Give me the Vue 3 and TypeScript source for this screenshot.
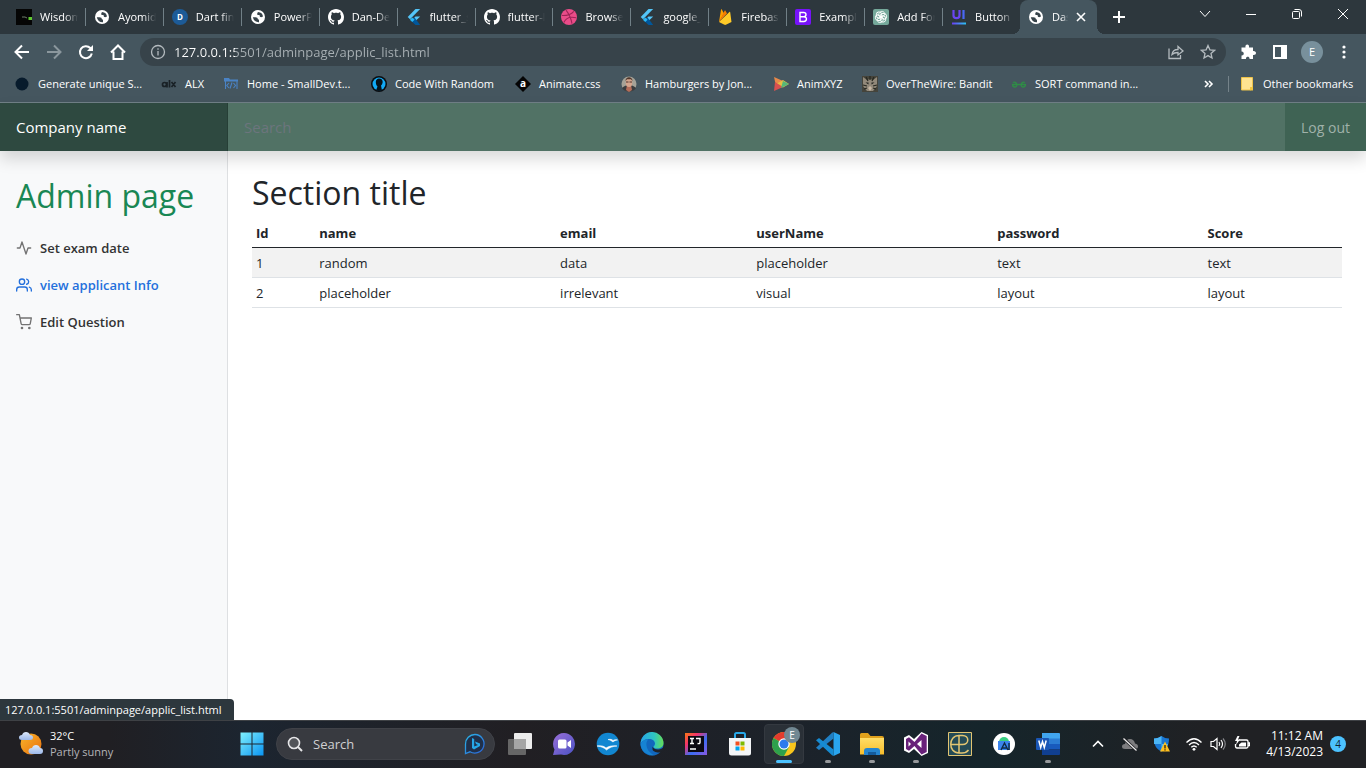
<script setup lang="ts">
import { ref } from 'vue'

interface Item { icon: string; label: string }
interface TaskApp extends Item { running?: boolean; active?: boolean }

const tabs: Item[] = [
  { icon: 'wisdom', label: 'Wisdom' },
  { icon: 'globe', label: 'Ayomide' },
  { icon: 'dart', label: 'Dart find' },
  { icon: 'globe', label: 'PowerPo' },
  { icon: 'github', label: 'Dan-Dev' },
  { icon: 'flutter', label: 'flutter_s' },
  { icon: 'github', label: 'flutter-l' },
  { icon: 'dribbble', label: 'Browse' },
  { icon: 'flutter', label: 'google_' },
  { icon: 'firebase', label: 'Firebase' },
  { icon: 'bootstrap', label: 'Example' },
  { icon: 'gpt', label: 'Add Fon' },
  { icon: 'ui', label: 'Button' },
]

const bookmarks: Item[] = [
  { icon: 'dot', label: 'Generate unique S...' },
  { icon: 'alx', label: 'ALX' },
  { icon: 'smalldev', label: 'Home - SmallDev.t...' },
  { icon: 'random', label: 'Code With Random' },
  { icon: 'animate', label: 'Animate.css' },
  { icon: 'person', label: 'Hamburgers by Jon...' },
  { icon: 'xyz', label: 'AnimXYZ' },
  { icon: 'cat', label: 'OverTheWire: Bandit' },
  { icon: 'geeks', label: 'SORT command in...' },
]

const links = [
  { icon: 'activity', label: 'Set exam date', active: false },
  { icon: 'users', label: 'view applicant Info', active: true },
  { icon: 'cart', label: 'Edit Question', active: false },
]

const columns = ['Id', 'name', 'email', 'userName', 'password', 'Score']
const rows = [
  ['1', 'random', 'data', 'placeholder', 'text', 'text'],
  ['2', 'placeholder', 'irrelevant', 'visual', 'layout', 'layout'],
]

const apps: TaskApp[] = [
  { icon: 'taskview', label: 'Task view' },
  { icon: 'chat', label: 'Chat' },
  { icon: 'office', label: 'OpenOffice' },
  { icon: 'edge', label: 'Edge' },
  { icon: 'idea', label: 'IntelliJ IDEA' },
  { icon: 'store', label: 'Store' },
  { icon: 'chrome', label: 'Chrome', running: true, active: true },
  { icon: 'vscode', label: 'VS Code', running: true },
  { icon: 'explorer', label: 'File Explorer', running: true },
  { icon: 'vs', label: 'Visual Studio', running: true },
  { icon: 'pe', label: 'PE' },
  { icon: 'android', label: 'Android Studio' },
  { icon: 'word', label: 'Word', running: true },
]

const url = ref('127.0.0.1:5501/adminpage/applic_list.html')
const query = ref('')
</script>

<template>
  <div class="screen">
    <svg class="defs" width="0" height="0" aria-hidden="true">
      <defs>
        <linearGradient id="g-win" x1="0" y1="0" x2="1" y2="1"><stop offset="0" stop-color="#7ff0fd" /><stop offset="1" stop-color="#0a94f2" /></linearGradient>
        <linearGradient id="g-sun" x1="0" y1="0" x2="1" y2="1"><stop offset="0" stop-color="#f9b52a" /><stop offset="1" stop-color="#e8700f" /></linearGradient>
        <linearGradient id="g-cloud" x1="0" y1="0" x2="0" y2="1"><stop offset="0" stop-color="#dce9fb" /><stop offset="1" stop-color="#9db9ea" /></linearGradient>
        <linearGradient id="g-bing" x1="0" y1="0" x2="1" y2="1"><stop offset="0" stop-color="#2bb7e8" /><stop offset="1" stop-color="#2b62d9" /></linearGradient>
        <linearGradient id="g-ui" x1="0" y1="0" x2="1" y2="0"><stop offset="0" stop-color="#6a3df5" /><stop offset="1" stop-color="#2ac3f2" /></linearGradient>
        <linearGradient id="g-chat" x1="0" y1="0" x2="1" y2="1"><stop offset="0" stop-color="#9a6fd8" /><stop offset="1" stop-color="#4a52c4" /></linearGradient>
        <linearGradient id="g-edge" x1="0" y1="0" x2="1" y2="0"><stop offset="0" stop-color="#27a4e8" /><stop offset=".6" stop-color="#2fc6c0" /><stop offset="1" stop-color="#66dd55" /></linearGradient>
        <linearGradient id="g-idea" x1="0" y1="0" x2="1" y2="1"><stop offset="0" stop-color="#f97a12" /><stop offset=".3" stop-color="#f4326b" /><stop offset=".6" stop-color="#3a6ef5" /><stop offset="1" stop-color="#8a58e0" /></linearGradient>
        <linearGradient id="g-folder" x1="0" y1="0" x2="0" y2="1"><stop offset="0" stop-color="#ffdd66" /><stop offset="1" stop-color="#f8bd2b" /></linearGradient>
      </defs>

      <symbol id="wisdom" viewBox="0 0 16 16"><rect width="16" height="16" fill="#050505" /><path d="M6 8h3l2 1" stroke="#6e7d6b" fill="none" /><path d="M12.500 9.500h3.500" stroke="#5fca30" stroke-width="3" /></symbol>
      <symbol id="globe" viewBox="0 0 16 16"><circle cx="8" cy="8" r="7" fill="#fff" /><path d="M8 3q4.500.3 5 4.500l-1.800.7q-1.700 0-1.700-2.200H7.500q-.8-1.500.5-3zM2.800 8.200h2.700q2.500 0 2.500 2.300h1v2.700Q4 13.500 2.800 8.200z" fill="#37434a" /></symbol>
      <symbol id="dart" viewBox="0 0 16 16"><circle cx="8" cy="8" r="8" fill="#1d5b97" /><text x="8" y="11" text-anchor="middle" font-family="Open Sans, sans-serif" font-weight="700" font-size="8" fill="#fff">D</text></symbol>
      <symbol id="github" viewBox="0 0 16 16"><path fill="#fff" d="M8 0C3.580 0 0 3.580 0 8c0 3.540 2.290 6.530 5.470 7.590.4.070.55-.17.55-.38 0-.19-.01-.82-.01-1.490-2.010.37-2.530-.49-2.690-.94-.09-.23-.48-.94-.82-1.130-.28-.15-.68-.52-.01-.53.63-.01 1.080.58 1.230.82.72 1.210 1.870.87 2.330.66.070-.52.28-.87.51-1.070-1.780-.2-3.640-.89-3.640-3.950 0-.87.31-1.590.82-2.150-.08-.2-.36-1.020.08-2.120 0 0 .67-.21 2.200.82.64-.18 1.320-.27 2-.27s1.360.09 2 .27c1.530-1.040 2.200-.82 2.200-.82.44 1.100.16 1.920.08 2.120.51.56.82 1.270.82 2.150 0 3.070-1.870 3.750-3.650 3.950.29.25.54.73.54 1.480 0 1.070-.01 1.930-.01 2.200 0 .21.15.46.55.38A8.010 8.010 0 0 0 16 8c0-4.420-3.580-8-8-8z" /></symbol>
      <symbol id="flutter" viewBox="0 0 16 16"><path d="M9.500 0h4.700L4 10.200 1.700 7.900z" fill="#54c5f8" /><path d="M9.500 7.400h4.700L8.400 13 6 10.700z" fill="#54c5f8" /><path d="M6 10.700l2.400-2.400 5.800 7.700H9.500l-3.400-3.300z" fill="#01579b" /><path d="M3.900 10.700L6.200 8.400l2.400 2.300-2.400 2.400z" fill="#29b6f6" /></symbol>
      <symbol id="dribbble" viewBox="0 0 16 16"><circle cx="8" cy="8" r="8" fill="#ea4c89" /><path d="M1 6.500c5 .2 9-.8 11.800-4.200M5 1.200c3 3.800 5 8 6 13.500M2.800 13.500c2-4.500 6.500-6.200 12.500-4.700" fill="none" stroke="#9e2457" stroke-width="1.100" /></symbol>
      <symbol id="firebase" viewBox="0 0 16 16"><path d="M2 13L4 .7c.1-.5.6-.5.8-.1L7 4.500z" fill="#ffa000" /><path d="M2 13l8-8.500-1.500-2.800c-.2-.4-.7-.4-.9 0z" fill="#f57c00" /><path d="M2 13L12.400 3c.3-.3.7-.1.8.3L14.500 13l-5.600 2.800c-.5.200-1 .2-1.400 0z" fill="#ffca28" /></symbol>
      <symbol id="bootstrap" viewBox="0 0 16 16"><rect width="16" height="16" rx="2" fill="#7712fa" /><path d="M5 3.500h3.700c3 0 3 4 .3 4.200 3.300 0 3.300 4.800-.2 4.800H5zM5 7.800h4" fill="none" stroke="#fff" stroke-width="1.400" /></symbol>
      <symbol id="gpt" viewBox="0 0 16 16"><rect width="16" height="16" rx="2" fill="#75a99b" /><g fill="none" stroke="#fff" stroke-width=".9"><path id="petal" d="M8 2.500c2.500-.7 4.500 1.500 3.500 3.800L8 8.300 5.800 7V4.500z" /><use href="#petal" transform="rotate(60 8 8)" /><use href="#petal" transform="rotate(120 8 8)" /><use href="#petal" transform="rotate(180 8 8)" /><use href="#petal" transform="rotate(240 8 8)" /><use href="#petal" transform="rotate(300 8 8)" /></g></symbol>
      <symbol id="ui" viewBox="0 0 16 16"><path d="M2.500 1v5.500c0 3.500 6 3.500 6 0V1" fill="none" stroke="#6a45f2" stroke-width="2.200" /><path d="M12.500 1v9" stroke="#4a68f5" stroke-width="2.200" /><path d="M1 13.500h14v2H1z" fill="url(#g-ui)" /></symbol>

      <symbol id="dot" viewBox="0 0 16 16"><circle cx="8" cy="8" r="6.500" fill="#071b2c" /></symbol>
      <symbol id="alx" viewBox="0 0 16 16"><g fill="none" stroke="#192126" stroke-width="1.700"><circle cx="3.500" cy="8.500" r="2" /><path d="M6 6v5.500M8.500 4v7.500M10.500 6l4 5M14.500 6l-4 5" /></g></symbol>
      <symbol id="smalldev" viewBox="0 0 16 16"><path d="M1 2h5l1 1.500h8v2H1z" fill="#4a83c5" /><path d="M2.500 5v8M14 5v8M6 7L3.800 9.500 6 12M9 6.500l-2 6M10.500 7l2 2.500-2 2.500" fill="none" stroke="#4a83c5" stroke-width="1.100" /></symbol>
      <symbol id="random" viewBox="0 0 16 16"><circle cx="8" cy="8" r="8" fill="#0a0d10" /><circle cx="8" cy="8" r="6.500" fill="#12aaf5" /><path d="M8 2.500c4.500 0 4.500 5 2 7l1 5c-2 .7-4.500.6-6 0l1.500-4C4 8 4.200 2.500 8 2.500z" fill="#06131b" /></symbol>
      <symbol id="animate" viewBox="0 0 16 16"><path d="M8 0l8 8-8 8-8-8z" fill="#050505" /><text x="8" y="11" text-anchor="middle" font-family="Open Sans, sans-serif" font-weight="700" font-size="10" fill="#fff">a</text></symbol>
      <symbol id="person" viewBox="0 0 16 16"><circle cx="8" cy="8" r="7.500" fill="#a5a297" /><path d="M1 12c4-4 10-4 14 0-3 5-11 5-14 0z" fill="#3b3d3f" /><path d="M6 9h4l1 5-3 2-3-2z" fill="#b46d59" /><ellipse cx="8" cy="6.500" rx="3.300" ry="4.500" fill="#d5a58d" /><path d="M4.500 5c0-5 7-5 7 0L10 3.200H6z" fill="#51372b" /><path d="M5 6h2.500M8.500 6H11" stroke="#4a332c" /></symbol>
      <symbol id="xyz" viewBox="0 0 16 16"><path d="M1 1l9 4-7 5z" fill="#e9894a" /><path d="M3 8l7-4 6 4-6 3.500z" fill="#e7bb44" /><path d="M1 15l1-9 8 5z" fill="#d9504f" /><path d="M10 5l6 3-8 4z" fill="#54b878" /></symbol>
      <symbol id="cat" viewBox="0 0 16 16"><rect width="16" height="16" fill="#45443b" /><path d="M1 1l4 3 3-1 3 1 4-3v9l-4 5H5l-4-5z" fill="#92897a" /><path d="M4 1l2 4M8 0v4M12 1l-2 4M1 9l4 1M15 9l-4 1M2 13l3-1M14 13l-3-1" stroke="#262720" stroke-width="1.200" /><path d="M3.500 6.500h3v2zM12.500 6.500h-3v2z" fill="#1e211d" /><path d="M6 12l2-2 2 2-2 3z" fill="#c7b7a3" /></symbol>
      <symbol id="geeks" viewBox="0 0 16 16"><path d="M1 8.500h14M2 6.500c3.500-2 5.500 4.500 2 4.500-2 0-2.500-1-2.500-2.500M14 6.500c-3.500-2-5.500 4.500-2 4.500 2 0 2.500-1 2.500-2.500" fill="none" stroke="#2f8d46" stroke-width="1.300" /></symbol>

      <symbol id="activity" viewBox="0 0 24 24"><path d="M22 12h-4l-3 9L9 3l-3 9H2" /></symbol>
      <symbol id="users" viewBox="0 0 24 24"><path d="M17 21v-2a4 4 0 0 0-4-4H5a4 4 0 0 0-4 4v2" /><circle cx="9" cy="7" r="4" /><path d="M23 21v-2a4 4 0 0 0-3-3.870M16 3.130a4 4 0 0 1 0 7.750" /></symbol>
      <symbol id="cart" viewBox="0 0 24 24"><circle cx="9" cy="21" r="1" /><circle cx="20" cy="21" r="1" /><path d="M1 1h4l2.680 13.390a2 2 0 0 0 2 1.610h9.720a2 2 0 0 0 2-1.610L23 6H6" /></symbol>

      <symbol id="taskview" viewBox="0 0 24 24"><rect x="6" y="1" width="18" height="16" rx="1" fill="#ececec" /><rect x="0" y="7" width="18" height="16" rx="1" fill="#666" /><path d="M6 7h12v10H6z" fill="#a5a5a5" /></symbol>
      <symbol id="chat" viewBox="0 0 24 24"><path d="M12 1a11 11 0 1 1-3 21.600L1 23l1.500-5.500A11 11 0 0 1 12 1z" fill="url(#g-chat)" /><rect x="6" y="7.500" width="8.500" height="9" rx="1.500" fill="#fff" /><path d="M15.500 10.500l3.500-2.500v8l-3.500-2.500z" fill="#fff" /></symbol>
      <symbol id="office" viewBox="0 0 24 24"><circle cx="12" cy="12" r="11.300" fill="#1287d1" /><path d="M1 14c4-.7 7 0 9 2 3-2 6-2.500 11-2-4 .3-7 1.300-10.500 4-2-2-5-3.500-9.500-4zM12 7.500c2.500-.5 4 0 5 1 1.500-1 3-1 4.500-.5-2 .3-3.300.8-4.500 2-1.500-1.200-2.700-2-5-2.500z" fill="#fff" stroke="#fff" stroke-width=".6" /></symbol>
      <symbol id="edge" viewBox="0 0 24 24"><circle cx="12" cy="12" r="11.500" fill="#1267bd" /><path d="M.5 12A11.500 11.500 0 0 1 23.500 11c0 4-3 5.500-6.500 5.500-2 0-3.500-.8-3.500-1.800 0-.8 1.500-1.200 1.500-3C15 9 12.500 7 9 7 5 7 1.500 9 .5 12z" fill="url(#g-edge)" /><path d="M.5 12C2 9 5 7.200 8.500 7.200 4 11 7 20 14 23A11.500 11.500 0 0 1 .5 12z" fill="#1683d3" /><path d="M12.500 14.500c1 3.500 6.500 4 10 1.500l1.500 1-3.500 3.500c-4 .5-8-1-8-3.500 0-1 0-2 0-2.500z" fill="#1e2229" /></symbol>
      <symbol id="idea" viewBox="0 0 24 24"><path d="M1 1h22v22H1z" fill="url(#g-idea)" /><path d="M4 4h16v16H4z" fill="#0b0912" /><path d="M6 6.500h4M8 6.500v5M6 11.500h4M12 6.500h4v4q0 1.500-2.500 1M6 17h6" fill="none" stroke="#fff" stroke-width="1.400" /></symbol>
      <symbol id="store" viewBox="0 0 24 24"><path d="M7 6V2.500Q7 1 8.500 1h7Q17 1 17 2.500V6" fill="none" stroke="#28a8e8" stroke-width="2" /><path d="M1 6h22v15q0 2.500-2.500 2.500h-17Q1 23.500 1 21z" fill="#f3f5f7" /><path d="M7.500 9.500h4v4h-4z" fill="#f25022" /><path d="M12.500 9.500h4v4h-4z" fill="#7fba00" /><path d="M7.500 14.500h4v4h-4z" fill="#00a4ef" /><path d="M12.500 14.500h4v4h-4z" fill="#ffb900" /></symbol>
      <symbol id="chrome" viewBox="0 0 24 24"><circle cx="12" cy="12" r="12" fill="#f9c61c" /><path d="M12 12L1.600 6A12 12 0 0 1 22.400 6z" fill="#e33b2e" /><path d="M12 12h0L1.600 6A12 12 0 0 0 12 24l5-9z" fill="#2ea14c" /><circle cx="12" cy="12" r="5.700" fill="#fff" /><circle cx="12" cy="12" r="4.500" fill="#2e7bec" /></symbol>
      <symbol id="vscode" viewBox="0 0 24 24"><path d="M17.500 0L24 3v18l-6.500 3z" fill="#29a5ee" /><path d="M17.500 0v6.500L3 18 0 15.700 16 .8z" fill="#2080c5" /><path d="M17.500 24v-6.500L3 6 0 8.300 16 23.200z" fill="#168bd2" /></symbol>
      <symbol id="explorer" viewBox="0 0 24 24"><path d="M0 2.500Q0 1 1.500 1H8l2.500 3H22q2 0 2 2v3H0z" fill="#e0a11c" /><path d="M0 6h24v16.500H0z" fill="url(#g-folder)" /><path d="M4 23v-4q0-3 3-3h10q3 0 3 3v4z" fill="#2585cf" /><path d="M8 20h8v3H8z" fill="#145b9c" /></symbol>
      <symbol id="vs" viewBox="0 0 24 24"><path d="M0 5.500L5 3l5 4 7.500-7L24 3v18l-6.500 3-7.500-7-5 4-5-2.500z" fill="#fff" /><path d="M2 7l3-1.700L10.500 10 17.500 1.500 22.700 4v16l-5.200 2.500L10.500 14 5 18.700 2 17zM4.500 9.500v5L7 12zm13-1.500L13 12l4.500 4z" fill="#68217a" fill-rule="evenodd" /></symbol>
      <symbol id="pe" viewBox="0 0 24 24"><path d="M.5.500h23v23H.5z" fill="#244a55" stroke="#e3c572" /><path d="M11 21V3.500h3.500c7 0 7 9 0 9H3M11 3.500C0 3.500 0 21 11 21h3c3 0 5-1 6.500-3" fill="none" stroke="#e3c572" stroke-width="1.500" /></symbol>
      <symbol id="android" viewBox="0 0 24 24"><circle cx="12" cy="12" r="11" fill="#fff" /><path d="M7 10a5 5 0 0 1 10 0z" fill="#37cf82" /><path d="M6 9h12v9H6z" fill="#3b85ed" /><path d="M9 18l3.500-7 3.500 7M10.500 16h4M17 11v7" fill="none" stroke="#102c45" stroke-width="1.400" /></symbol>
      <symbol id="word" viewBox="0 0 24 24"><path d="M6 1h17q1 0 1 1v5H6z" fill="#41a5ee" /><path d="M6 6.500h18V12H6z" fill="#2b7cd3" /><path d="M6 12h18v5.500H6z" fill="#185abd" /><path d="M6 17.500h18V22q0 1-1 1H6z" fill="#103f91" /><rect y="6" width="13" height="12" rx="1" fill="#1a56b5" /><path d="M2.800 8.500l1.900 7 1.800-6 1.800 6 1.900-7" fill="none" stroke="#fff" stroke-width="1.500" /></symbol>
    </svg>

    <header class="browser">
      <div class="tabstrip">
        <div class="tabs">
          <button v-for="(tab, i) in tabs" :key="i" class="tab" type="button">
            <svg class="ico16"><use :href="'#' + tab.icon" /></svg>
            <span class="tab-title">{{ tab.label }}</span>
          </button>
          <button class="tab current" type="button">
            <svg class="ico16"><use href="#globe" /></svg>
            <span class="tab-title">Das</span>
            <svg class="tab-close" viewBox="0 0 12 12"><path d="M2 2l8 8M10 2l-8 8" stroke="#fff" stroke-width="1.600" /></svg>
          </button>
        </div>
        <button class="new-tab" type="button" aria-label="New tab"><svg width="14" height="14" viewBox="0 0 14 14"><path d="M7 1v12M1 7h12" stroke="#fff" stroke-width="2" /></svg></button>
        <div class="window-controls">
          <button type="button" aria-label="Search tabs"><svg viewBox="0 0 12 12"><path d="M1 3l5 5.500L11 3" /></svg></button>
          <button type="button" aria-label="Minimize"><svg viewBox="0 0 12 12"><path d="M1 6.500h10" /></svg></button>
          <button type="button" aria-label="Restore"><svg viewBox="0 0 12 12"><rect x="1.500" y="3.500" width="7" height="7" rx="1" /><path d="M3.500 1.500H8q2.500 0 2.500 2.500v4.500" /></svg></button>
          <button type="button" aria-label="Close"><svg viewBox="0 0 12 12"><path d="M1 1l10 10M11 1L1 11" /></svg></button>
        </div>
      </div>

      <div class="toolbar">
        <button class="tool" type="button" aria-label="Back"><svg viewBox="0 0 16 16"><path d="M15 8H2M8 1.500L1.500 8 8 14.500" /></svg></button>
        <button class="tool dim" type="button" aria-label="Forward"><svg viewBox="0 0 16 16"><path d="M1 8h13M8 1.500L14.500 8 8 14.500" /></svg></button>
        <button class="tool" type="button" aria-label="Reload"><svg viewBox="0 0 16 16"><path d="M13.800 9.500a6 6 0 1 1-1.500-5.500L14 5.700" /><path d="M15 1v6H9z" fill="#fff" stroke="none" /></svg></button>
        <button class="tool" type="button" aria-label="Home"><svg viewBox="0 0 16 16"><path d="M1 8.500L8 1.500l7 7M3.500 7.500V15h9V7.500" /></svg></button>
        <div class="omnibox">
          <svg class="info" viewBox="0 0 16 16"><circle cx="8" cy="8" r="6.500" /><path d="M8 7v4.500M8 4.200v1.500" /></svg>
          <input v-model="url" class="address" type="text" aria-label="Address">
          <button type="button" aria-label="Share"><svg viewBox="0 0 16 16"><path d="M1 4.500V14.500h11.500V11M4 10.500c.5-4 3-5 6-5V2.500L15 7l-5 4V8.500c-3 0-4.500.5-6 2z" /></svg></button>
          <button type="button" aria-label="Bookmark"><svg viewBox="0 0 16 16"><path d="M8 1.500l1.900 4.300 4.700.5L11 9.400l1 4.600-4-2.400L4 14l1-4.600L1.400 6.300l4.700-.5z" /></svg></button>
        </div>
        <button class="tool" type="button" aria-label="Extensions"><svg viewBox="0 0 16 16"><path d="M2.500 3.500h3c-.8-4 4.300-4 3.500 0h4V7c4-.5 4 4.500 0 4v4H9.500c.5-3-4-3-3.500 0H1.500v-3.500c3 .3 3-4.300 0-4V3.500z" fill="#fff" stroke="none" /></svg></button>
        <button class="tool" type="button" aria-label="Side panel"><svg viewBox="0 0 16 16"><path d="M2 2h12v12H2z" /><path d="M9 2h5v12H9z" fill="#fff" stroke="none" /></svg></button>
        <button class="tool avatar" type="button">E</button>
        <button class="tool" type="button" aria-label="Menu"><svg viewBox="0 0 16 16"><g fill="#fff" stroke="none"><circle cx="8" cy="3" r="1.600" /><circle cx="8" cy="8" r="1.600" /><circle cx="8" cy="13" r="1.600" /></g></svg></button>
      </div>

      <nav class="bookmarks" aria-label="Bookmarks">
        <a v-for="b in bookmarks" :key="b.label" href="#" class="bookmark">
          <svg class="ico16"><use :href="'#' + b.icon" /></svg>{{ b.label }}
        </a>
        <button class="more" type="button" aria-label="More bookmarks"><svg width="10" height="8" viewBox="0 0 10 8"><path d="M1 1l3 3-3 3M5 1l3 3-3 3" fill="none" stroke="#fff" stroke-width="1.600" /></svg></button>
        <a href="#" class="bookmark other">
          <svg class="ico16" viewBox="0 0 16 16"><path d="M.500 1.500h11v10l-2 2.500h-9z" fill="#ffe391" stroke="#eec34a" /><path d="M9 11h3v3.500H9z" fill="#f2c53d" /></svg>Other bookmarks
        </a>
      </nav>
    </header>

    <div class="page">
      <header class="navbar">
        <a href="#" class="brand">Company name</a>
        <input v-model="query" class="search" type="text" placeholder="Search" aria-label="Search">
        <a href="#" class="logout">Log out</a>
      </header>
      <div class="body">
        <nav class="sidebar">
          <h1>Admin page</h1>
          <ul>
            <li v-for="l in links" :key="l.label">
              <a href="#" :class="{ active: l.active }"><svg class="feather"><use :href="'#' + l.icon" /></svg>{{ l.label }}</a>
            </li>
          </ul>
        </nav>
        <main class="content">
          <h2>Section title</h2>
          <table>
            <thead>
              <tr><th v-for="c in columns" :key="c" scope="col">{{ c }}</th></tr>
            </thead>
            <tbody>
              <tr v-for="r in rows" :key="r[0]"><td v-for="(cell, i) in r" :key="i">{{ cell }}</td></tr>
            </tbody>
          </table>
        </main>
      </div>
      <div class="status">127.0.0.1:5501/adminpage/applic_list.html</div>
    </div>

    <footer class="taskbar">
      <div class="weather">
        <svg width="26" height="26" viewBox="0 0 26 26"><circle cx="13" cy="13" r="10.500" fill="url(#g-sun)" /><path d="M4 9q-3 0-3-2.500T4 4q1-3 4-3t4 3q3 0 3 2.500T12 9z" fill="url(#g-cloud)" /><path d="M14 23q-3.500 0-3.500-3t3.500-3q1-3 4-3t4 3q3 0 3 3t-3 3z" fill="url(#g-cloud)" /></svg>
        <div class="weather-text"><span>32°C</span><span class="muted">Partly sunny</span></div>
      </div>
      <button class="app" type="button" aria-label="Start"><svg class="ico24" viewBox="0 0 24 24"><path d="M.500.500h11v11H.5zM12.500.500h11v11h-11zM.500 12.500h11v11H.5zM12.500 12.500h11v11h-11z" fill="url(#g-win)" /></svg></button>
      <label class="task-search">
        <svg width="16" height="16" viewBox="0 0 16 16"><circle cx="7" cy="7" r="5.500" fill="#ffffff22" stroke="#e6e6e8" stroke-width="1.600" /><path d="M11 11l4 4" stroke="#e6e6e8" stroke-width="2" /></svg>
        <input type="text" placeholder="Search" aria-label="Search Windows">
        <svg width="22" height="22" viewBox="0 0 22 22"><path d="M11 1.500a9.300 9.300 0 1 1-5 17.300L1.500 20.500V11A9.400 9.400 0 0 1 11 1.500z" fill="#20304a" stroke="url(#g-bing)" stroke-width="1.300" /><path d="M8 5l2.200 1v7.500L14 12l-2-1-1-2.500 5 2v2.500l-6 3.500L8 15z" fill="#26a8e8" /></svg>
      </label>
      <div class="apps">
        <button v-for="a in apps" :key="a.icon" class="app" :class="{ focused: a.active }" type="button" :aria-label="a.label">
          <svg class="ico24"><use :href="'#' + a.icon" /></svg>
          <span v-if="a.active" class="profile">E</span>
          <span v-if="a.running" class="running" />
        </button>
      </div>
      <div class="tray">
        <button type="button" aria-label="Hidden icons"><svg class="w12" viewBox="0 0 12 12"><path d="M1 8.500L6 3.500l5 5" fill="none" stroke="#fff" stroke-width="1.600" /></svg></button>
        <button type="button" aria-label="OneDrive"><svg viewBox="0 0 16 16"><path d="M3 13Q0 13 0 10.500T3 8q1-5 5-5t5 4.500q3 .5 3 3T13 13z" fill="#7d7d7f" /><path d="M1.500 2.500l13 12" stroke="#202125" stroke-width="3" /><path d="M1.500 2.500l13 12" stroke="#ededed" stroke-width="1.200" /></svg></button>
        <button type="button" aria-label="Security"><svg viewBox="0 0 16 16"><path d="M7.500 0Q11 2.500 15 2.500C15 9 13 13 7.500 15.500 2 13 0 9 0 2.500 4 2.500 7.500 0 7.500 0z" fill="#1976d2" /><path d="M7.500 0Q4 2.500 0 2.500V8h7.500zM7.500 8H14q-1.500 5-6.500 7.500z" fill="#4bb5f5" /><path d="M11 5.500l5 10H6z" fill="#ffc01f" /><path d="M11 9v3.500M11 13.300v1.200" stroke="#30220a" stroke-width="1.300" /></svg></button>
        <div class="system">
          <svg viewBox="0 0 16 16"><g fill="none" stroke="#fff" stroke-width="1.300"><path d="M.500 6.500q7.500-7.500 15 0M3 9q5-5 10 0M5.300 11.300q2.700-2.600 5.400 0" /></g><circle cx="8" cy="13.300" r="1.400" fill="#fff" /></svg>
          <svg viewBox="0 0 16 16"><g fill="none" stroke="#fff" stroke-width="1.200"><path d="M1 5.500h2.500l3.500-3v11l-3.500-3H1zM9 6q1.500 2 0 4M11 4q3 4 0 8" /><path d="M13 2.500q4.500 5.500 0 11" stroke="#85868a" /></g></svg>
          <svg viewBox="0 0 16 16"><path d="M5 4h7.500q1.500 0 1.500 1.500v5q0 1.500-1.500 1.500H3q-1.500 0-1.500-2V8M14 7h1.500v2.500H14" fill="none" stroke="#fff" stroke-width="1.300" /><path d="M5 8.500l2.500-2H12v4H5z" fill="#fff" /><path d="M3.500 0L1 5h2L2 9l4-5.500H4L5.500 0z" fill="#fff" /></svg>
        </div>
        <div class="clock"><span>11:12 AM</span><span>4/13/2023</span></div>
        <span class="badge">4</span>
      </div>
    </footer>
  </div>
</template>

<style>
body { margin: 0; }
</style>

<style scoped>
.screen, .screen * { box-sizing: border-box; }
.screen { display: flex; flex-direction: column; min-height: 100vh; background: #fff; color: #212529; font-family: "Open Sans", "Noto Sans", sans-serif; font-size: 13px; }
.defs { position: absolute; }
button, input { margin: 0; padding: 0; border: 0; background: none; color: inherit; font: inherit; outline: 0; }
a { color: inherit; text-decoration: none; }
svg { flex: none; display: block; }
.ico16 { width: 16px; height: 16px; }
.ico24 { width: 24px; height: 24px; }

.browser { background: #45565f; border-bottom: 1px solid #718087; color: #fff; font-size: 11px; }
.tabstrip { display: flex; align-items: stretch; height: 34px; padding-left: 8px; background: #2d373d; }
.tabs { display: flex; flex: 0 1 1089px; align-items: center; min-width: 0; }
.tab { display: flex; flex: 1 1 0; align-items: center; gap: 8px; min-width: 0; height: 18px; padding: 0 7px 0 8px; border-left: 1px solid #718087; }
.tab:first-child { border-left: 0; }
.tab-title { flex: 1; min-width: 0; overflow: hidden; white-space: nowrap; text-align: left; line-height: 18px; mask-image: linear-gradient(90deg, #000 65%, transparent); }
.tab.current { position: relative; height: 34px; border: 0; border-radius: 8px 8px 0 0; background: #45565f; }
.tab.current::before, .tab.current::after { content: ""; position: absolute; bottom: 0; width: 8px; height: 8px; }
.tab.current::before { right: 100%; background: radial-gradient(circle at 0 0, transparent 8px, #45565f 8px); }
.tab.current::after { left: 100%; background: radial-gradient(circle at 100% 0, transparent 8px, #45565f 8px); }
.tab-close { width: 12px; height: 12px; margin: 0 3px 0 -1px; }
.new-tab { display: grid; place-items: center; width: 28px; margin-left: 8px; }
.window-controls { display: flex; margin-left: auto; height: 28px; }
.window-controls button { display: grid; place-items: center; width: 46px; }
.window-controls svg { width: 12px; height: 12px; fill: none; stroke: #fff; stroke-width: 1; }

.toolbar { display: flex; align-items: center; gap: 4px; height: 36px; padding: 0 8px; }
.tool { display: grid; place-items: center; flex: none; width: 28px; height: 28px; }
.tool svg { width: 16px; height: 16px; fill: none; stroke: #fff; stroke-width: 2; }
.tool.dim svg { stroke: #8b979d; }
.tool.avatar { width: 22px; height: 22px; margin: 0 3px; border-radius: 50%; background: #78909c; line-height: 22px; }
.omnibox { display: flex; flex: 1; align-items: center; height: 28px; margin: 0 4px; padding: 0 10px; border-radius: 14px; background: #37434a; }
.omnibox svg { width: 16px; height: 16px; fill: none; stroke: #b4bbbf; stroke-width: 1.3; }
.omnibox button { margin-left: 16px; }
.address { flex: 1; min-width: 0; height: 28px; margin-left: 8px; font-size: 13px; background: linear-gradient(90deg, #fff 61px, #a9b1b5 61px); -webkit-background-clip: text; background-clip: text; color: transparent; }

.bookmarks { display: grid; grid-template-columns: 147px 62px 148px 144px 106px 152px 89px 149px 140px 1fr 128px; align-items: center; height: 32px; padding: 0 10px 4px 14px; }
.bookmark { display: flex; align-items: center; gap: 8px; white-space: nowrap; line-height: 16px; }
.more { justify-self: end; padding: 4px 14px 4px 0; }
.other { padding-left: 12px; border-left: 1px solid #75838a; gap: 6px; }

.page { position: relative; display: flex; flex: 1; flex-direction: column; }
.navbar { position: relative; z-index: 1; display: flex; height: 48px; background: #3f6354; box-shadow: 0 8px 16px rgba(0, 0, 0, .15); }
.brand { flex: 0 0 228px; padding: 0 16px; border-right: 1px solid #263f36; background: #2e4940; color: #fff; font-size: 15px; line-height: 48px; }
.search { flex: 1; min-width: 0; padding: 0 16px; background: #517265; color: #fff; font-size: 15px; }
.search::placeholder { color: #6c757d; opacity: 1; }
.logout { padding: 0 16px; color: #a0b2aa; font-size: 14px; line-height: 50px; }
.body { display: flex; flex: 1; }
.sidebar { flex: 0 0 228px; padding: 24px 16px 0; border-right: 1px solid #dee0e2; background: #f8f9fa; }
h1, h2 { margin: 0; font-size: 32px; font-weight: 500; white-space: nowrap; }
h1 { color: #198754; line-height: 42px; }
ul { margin: 12px 0 0; padding: 0; list-style: none; }
.sidebar a { display: flex; align-items: center; gap: 8px; height: 37px; color: #333; font-size: 13px; font-weight: 600; }
.sidebar a.active { color: #2470dc; }
.feather { width: 16px; height: 16px; fill: none; stroke: #727272; stroke-width: 2; stroke-linecap: round; stroke-linejoin: round; }
.active .feather { stroke: #2470dc; }
.content { flex: 1; min-width: 0; padding: 24px 24px 0; }
h2 { margin-bottom: 7px; line-height: 36px; }
table { width: 100%; border-collapse: collapse; table-layout: fixed; font-size: 13px; line-height: 21px; }
th, td { padding: 5px 4px 3px; border-bottom: 1px solid #dee2e6; text-align: left; font-weight: 400; }
th { border-bottom-color: #212529; font-weight: 700; }
th:nth-child(1) { width: 5.8%; }
th:nth-child(2), th:nth-child(4) { width: 22.1%; }
th:nth-child(3) { width: 18%; }
th:nth-child(5) { width: 19.3%; }
tbody tr:nth-child(odd) { background: #f2f2f2; }
.status { position: absolute; z-index: 2; left: 0; bottom: 0; padding: 0 12px 0 5px; border-radius: 0 4px 0 0; background: #2d373d; color: #fff; font-size: 11px; line-height: 21px; }

.taskbar { display: flex; align-items: center; height: 48px; box-shadow: inset 0 1px #3e4145; background: linear-gradient(90deg, #201f23 8%, #1c2530 18%, #211f23 38%, #1c222a 58%, #15252b 72%, #202124 88%); color: #fff; font-size: 11px; }
.weather { display: flex; align-items: center; gap: 6px; flex: 0 0 232px; padding-left: 18px; }
.weather-text, .clock { display: flex; flex-direction: column; line-height: 16px; }
.muted { color: #b4b4b7; }
.app { position: relative; display: grid; place-items: center; flex: none; width: 40px; height: 40px; border: 1px solid transparent; border-radius: 4px; }
.app.focused { border-color: #343940; background: #2a3037; }
.profile { position: absolute; top: 2px; right: 3px; width: 16px; height: 16px; border-radius: 50%; background: #718893; font-size: 10px; line-height: 16px; text-align: center; }
.running { position: absolute; bottom: 0; left: 16px; width: 6px; height: 3px; border-radius: 2px; background: #97999c; }
.focused .running { left: 11px; width: 16px; background: #4cc2ff; }
.task-search { display: flex; align-items: center; gap: 10px; flex: 0 1 219px; min-width: 0; height: 32px; margin: 0 5px 0 4px; padding: 0 8px 0 10px; border: 1px solid #404248; border-radius: 16px; background: #383a40; }
.task-search input { flex: 1; min-width: 0; font-size: 13px; }
.task-search input::placeholder { color: #d0d0d2; opacity: 1; }
.apps { display: flex; gap: 4px; }
.tray { display: flex; align-items: center; margin-left: auto; padding-right: 20px; }
.tray button { display: grid; place-items: center; width: 32px; height: 32px; }
.tray svg { width: 16px; height: 16px; }
.tray svg.w12 { width: 12px; height: 12px; }
.system { display: flex; gap: 8px; margin: 0 16px 0 8px; }
.clock { text-align: right; font-size: 12px; }
.badge { width: 16px; height: 16px; margin-left: 7px; border-radius: 50%; background: #4cc2ff; color: #10242f; font-size: 10px; line-height: 16px; text-align: center; }
</style>
